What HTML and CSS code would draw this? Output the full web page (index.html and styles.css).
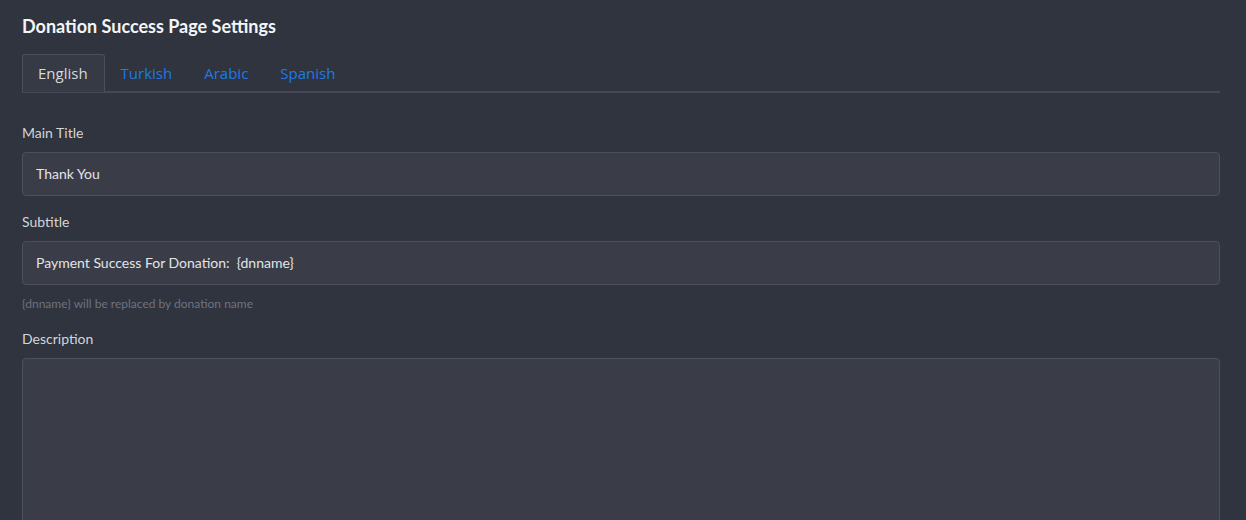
FILE: index.html
```html
<!DOCTYPE html>
<html>
<head>
    <title>Donation Success Page Settings</title>
    <link rel="stylesheet" href="styles.css">
</head>
<body>
<div class="page">
    <h1>Donation Success Page Settings</h1>
    <ul class="tabs">
        <li class="tab active">English</li>
        <li class="tab">Turkish</li>
        <li class="tab">Arabic</li>
        <li class="tab">Spanish</li>
    </ul>
    <div class="field">
        <label for="main-title">Main Title</label>
        <input type="text" id="main-title" value="Thank You">
    </div>
    <div class="field">
        <label for="subtitle">Subtitle</label>
        <input type="text" id="subtitle" value="Payment Success For Donation:  {dnname}">
        <small class="help">{dnname} will be replaced by donation name</small>
    </div>
    <div class="field">
        <label for="description">Description</label>
        <textarea id="description"></textarea>
    </div>
</div>
</body>
</html>
```

FILE: styles.css
```css
body {
    margin: 0;
    background-color: #2f343f;
    font-family: Lato, "Liberation Sans", sans-serif;
    color: #d6d8dd;
}

.page {
    padding: 14px 26px 0 22px;
}

h1 {
    margin: 0 0 16px;
    font-size: 18px;
    font-weight: 700;
    line-height: 24px;
    color: #f4f5f7;
}

.tabs {
    display: flex;
    list-style: none;
    margin: 0 0 30px;
    padding: 0;
    border-bottom: 2px solid #444955;
}

.tab {
    padding: 0 15px;
    height: 37px;
    line-height: 36px;
    font-family: "Open Sans", sans-serif;
    font-size: 15px;
    color: #1f78e6;
    border: 1px solid transparent;
    border-bottom: none;
    border-radius: 3px 3px 0 0;
    margin-bottom: -1px;
}

.tab.active {
    padding: 0 16px 0 15px;
    color: #d6d8dd;
    background-color: #363a45;
    border-color: #4b4f5b;
}

.field {
    margin-bottom: 16px;
}

label {
    display: block;
    font-size: 14px;
    line-height: 20px;
    margin-bottom: 9px;
    color: #d3d5da;
}

input[type="text"], textarea {
    display: block;
    width: 100%;
    box-sizing: border-box;
    height: 44px;
    padding: 0 13px 2px;
    font-family: Lato, "Liberation Sans", sans-serif;
    font-size: 14px;
    color: #e2e4e8;
    background-color: #3a3d48;
    border: 1px solid #4c505c;
    border-radius: 4px;
}

textarea {
    height: 200px;
    resize: none;
}

.help {
    display: block;
    margin-top: 11px;
    padding-bottom: 2px;
    font-size: 12px;
    color: #6e7280;
}
```
